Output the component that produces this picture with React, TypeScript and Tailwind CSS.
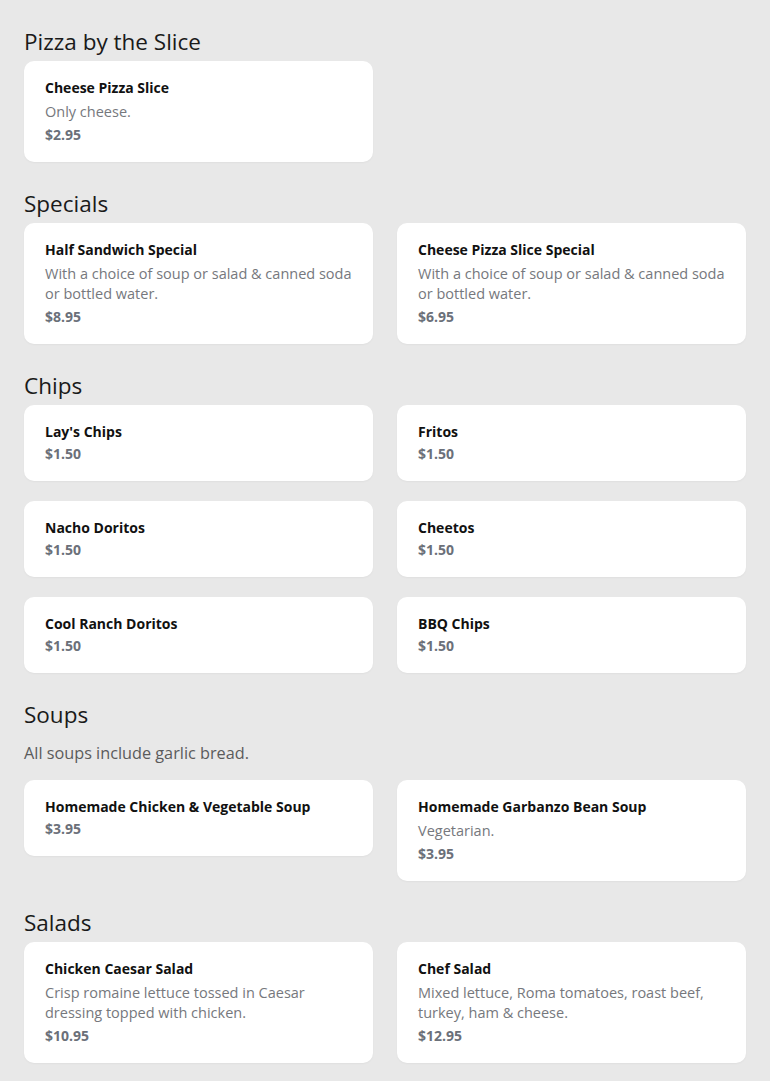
type Item = {
  name: string
  description?: string
  price: string
}

type Section = {
  title: string
  note?: string
  items: Item[]
}

const sections: Section[] = [
  {
    title: 'Pizza by the Slice',
    items: [{ name: 'Cheese Pizza Slice', description: 'Only cheese.', price: '$2.95' }],
  },
  {
    title: 'Specials',
    items: [
      {
        name: 'Half Sandwich Special',
        description: 'With a choice of soup or salad & canned soda or bottled water.',
        price: '$8.95',
      },
      {
        name: 'Cheese Pizza Slice Special',
        description: 'With a choice of soup or salad & canned soda or bottled water.',
        price: '$6.95',
      },
    ],
  },
  {
    title: 'Chips',
    items: [
      { name: "Lay's Chips", price: '$1.50' },
      { name: 'Fritos', price: '$1.50' },
      { name: 'Nacho Doritos', price: '$1.50' },
      { name: 'Cheetos', price: '$1.50' },
      { name: 'Cool Ranch Doritos', price: '$1.50' },
      { name: 'BBQ Chips', price: '$1.50' },
    ],
  },
  {
    title: 'Soups',
    note: 'All soups include garlic bread.',
    items: [
      { name: 'Homemade Chicken & Vegetable Soup', price: '$3.95' },
      { name: 'Homemade Garbanzo Bean Soup', description: 'Vegetarian.', price: '$3.95' },
    ],
  },
  {
    title: 'Salads',
    items: [
      {
        name: 'Chicken Caesar Salad',
        description: 'Crisp romaine lettuce tossed in Caesar dressing topped with chicken.',
        price: '$10.95',
      },
      {
        name: 'Chef Salad',
        description: 'Mixed lettuce, Roma tomatoes, roast beef, turkey, ham & cheese.',
        price: '$12.95',
      },
    ],
  },
]

function MenuCard({ item }: { item: Item }) {
  return (
    <div className="bg-white rounded-[10px] pl-[21px] pr-5 pt-[17px] pb-[17px] shadow-[0_1px_2px_rgba(0,0,0,0.04)]">
      <h3 className="text-[14px] leading-5 font-bold text-[#111]">{item.name}</h3>
      {item.description && (
        <p className="mt-1 text-[14.5px] leading-5 text-[#76787d]">{item.description}</p>
      )}
      <div className={`${item.description ? 'mt-[3px]' : 'mt-0.5'} text-[14px] leading-5 font-bold text-[#6b7079]`}>
        {item.price}
      </div>
    </div>
  )
}

export default function App() {
  return (
    <div className="min-h-screen bg-[#e8e8e8] px-6 pb-6 font-['Open_Sans',sans-serif]">
      {sections.map((section) => (
        <section key={section.title} className="pt-[26px]">
          <h2 className="text-[22.5px] leading-8 text-[#1a1a1a] mb-[3px]">{section.title}</h2>
          {section.note && (
            <p className="text-[16.25px] leading-6 text-[#5b5b5b] mt-[10px] mb-[15px]">{section.note}</p>
          )}
          <div className="grid grid-cols-2 gap-x-6 gap-y-5 items-start">
            {section.items.map((item) => (
              <MenuCard key={item.name} item={item} />
            ))}
          </div>
        </section>
      ))}
    </div>
  )
}
